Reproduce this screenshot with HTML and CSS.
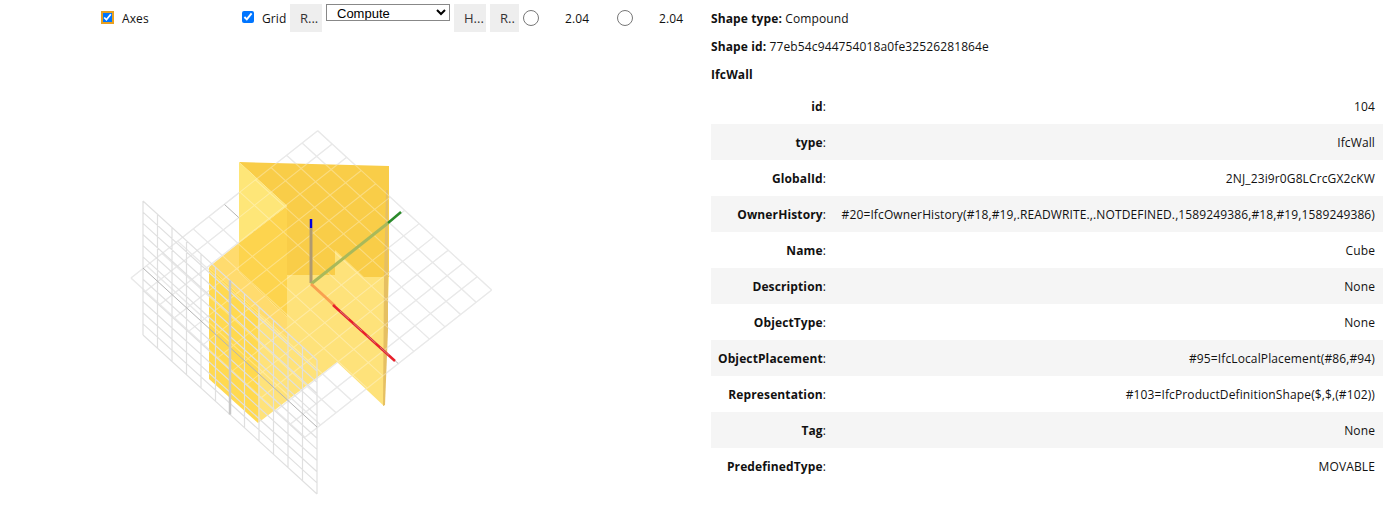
FILE: index.html
```html
<!DOCTYPE html>
<html lang="en">
<head>
  <meta charset="UTF-8">
  <meta name="viewport" content="width=device-width, initial-scale=1.0">
  <title>IfcWall</title>
  <link rel="stylesheet" href="styles.css">
</head>
<body>
  <div class="viewer">
    <div class="toolbar">
      <label class="check check-axes"><input type="checkbox" checked><span>Axes</span></label>
      <label class="check check-grid"><input type="checkbox" checked><span>Grid</span></label>
      <button class="tool-btn">R...</button>
      <select class="compute"><option>Compute</option></select>
      <button class="tool-btn">H...</button>
      <button class="tool-btn tool-btn-last">R..</button>
      <div class="clip clip-first"><input type="radio"><span>2.04</span></div>
      <div class="clip"><input type="radio"><span>2.04</span></div>
    </div>

    <svg class="scene" width="711" height="471" viewBox="0 36 711 471">
      <defs>
        <path id="cells" d="M0 0H12M0 1H12M0 2H12M0 3H12M0 4H12M0 5H12M0 7H12M0 8H12M0 9H12M0 10H12M0 11H12M0 12H12M0 0V12M1 0V12M2 0V12M3 0V12M4 0V12M5 0V12M7 0V12M8 0V12M9 0V12M10 0V12M11 0V12M12 0V12M6 0V12" vector-effect="non-scaling-stroke"/>
      </defs>

      <!-- floor grid -->
      <g class="grid-floor" transform="matrix(14.5 13.275 -15.56 12.275 317.7 130.7)">
        <use href="#cells"/>
        <path class="grid-center" d="M0 6H12" vector-effect="non-scaling-stroke"/>
      </g>

      <!-- wall -->
      <polygon class="wall-back" points="239,162 389,166 389,277 287,277 287,206"/>
      <polygon class="wall-tip" points="239,162 287,206 239,243"/>
      <polygon class="wall-mid" points="239,243 287,206 287,317 239,272"/>
      <polygon class="wall-light" points="287,275 335,275 335,250 364,277 389,277 384,406 337,362 258,423 258,312 287,338"/>
      <polygon class="wall-band" points="209,267 239,243 239,272 287,317 287,338 258,312"/>
      <polygon class="wall-left" points="209,267 258,312 258,423 209,379"/>
      <polygon class="wall-edge" points="386,190 388,190 388,330 385,405 383,406 384,277"/>

      <g class="grid-over" transform="matrix(14.5 13.275 -15.56 12.275 317.7 130.7)">
        <use href="#cells"/>
      </g>

      <!-- axes -->
      <path class="axis axis-z" d="M311 283V228"/>
      <path class="axis-tip tip-z" d="M311 228V219"/>
      <path class="axis axis-y" d="M311 284L388 223"/>
      <path class="axis-tip tip-y" d="M388 223L401 212"/>
      <path class="axis axis-x" d="M311 284L335 306"/>
      <path class="axis-tip tip-x" d="M333 305L395 361"/>
      <path class="tip-core" d="M340 311L392 358"/>

      <!-- side grid -->
      <g class="grid-side" transform="matrix(14.5 13.25 0 11.17 143 201)">
        <use href="#cells"/>
        <path class="grid-center" d="M0 6H12" vector-effect="non-scaling-stroke"/>
        <path class="grid-thick" d="M6 0V12" vector-effect="non-scaling-stroke"/>
      </g>
    </svg>
  </div>

  <div class="info">
    <p class="info-line"><b>Shape type:</b> Compound</p>
    <p class="info-line"><b>Shape id:</b> 77eb54c944754018a0fe32526281864e</p>
    <p class="info-line"><b>IfcWall</b></p>
    <table class="props">
      <tr><th><b>id</b>:</th><td>104</td></tr>
      <tr><th><b>type</b>:</th><td>IfcWall</td></tr>
      <tr><th><b>GlobalId</b>:</th><td>2NJ_23i9r0G8LCrcGX2cKW</td></tr>
      <tr><th><b>OwnerHistory</b>:</th><td>#20=IfcOwnerHistory(#18,#19,.READWRITE.,.NOTDEFINED.,1589249386,#18,#19,1589249386)</td></tr>
      <tr><th><b>Name</b>:</th><td>Cube</td></tr>
      <tr><th><b>Description</b>:</th><td>None</td></tr>
      <tr><th><b>ObjectType</b>:</th><td>None</td></tr>
      <tr><th><b>ObjectPlacement</b>:</th><td>#95=IfcLocalPlacement(#86,#94)</td></tr>
      <tr><th><b>Representation</b>:</th><td>#103=IfcProductDefinitionShape($,$,(#102))</td></tr>
      <tr><th><b>Tag</b>:</th><td>None</td></tr>
      <tr><th><b>PredefinedType</b>:</th><td>MOVABLE</td></tr>
    </table>
  </div>
</body>
</html>
```

FILE: styles.css
```css
* {
  box-sizing: border-box;
  margin: 0;
  padding: 0;
}

body {
  display: flex;
  font-family: "Open Sans", sans-serif;
  font-size: 12px;
  letter-spacing: 0.12px;
  color: #111;
  background-color: #fff;
  overflow: hidden;
}

.viewer {
  width: 711px;
  flex: none;
}

.toolbar {
  display: flex;
  align-items: flex-start;
  height: 36px;
  padding: 4px 0 0 102px;
}

.toolbar > * {
  flex: none;
}

.check {
  display: flex;
  align-items: center;
  height: 28px;
}

.check input {
  width: 12px;
  height: 12px;
  margin-right: 8px;
  margin-bottom: 2px;
  accent-color: #0075ff;
}

.check-axes {
  width: 140px;
}

.check-axes input {
  width: 11px;
  height: 11px;
  margin-right: 9px;
  outline: 2px solid #e8a020;
  outline-offset: -1px;
}

.check-grid {
  width: 48px;
}

.tool-btn {
  width: 32px;
  height: 28px;
  padding-left: 10px;
  border: none;
  background-color: #eee;
  font-family: inherit;
  font-size: 13px;
  text-align: left;
  color: #333;
  overflow: hidden;
  white-space: nowrap;
}

.tool-btn-last {
  width: 29px;
  margin-left: 4px;
}

.compute {
  width: 124px;
  height: 17px;
  margin: 0 4px;
  padding-left: 6px;
  border: 1px solid #888;
  background-color: #fff;
  font-family: "Liberation Sans", sans-serif;
  font-size: 13px;
  letter-spacing: 0;
}

.clip {
  display: flex;
  align-items: center;
  height: 28px;
  width: 94px;
}

.clip-first {
  margin-left: 4px;
}

.clip input {
  width: 16px;
  height: 16px;
  margin-right: 26px;
  appearance: none;
  border: 1px solid #777;
  border-radius: 50%;
}

.scene {
  display: block;
}

.scene use,
.scene path {
  fill: none;
}

.grid-floor,
.grid-side {
  stroke: #e0e0e0;
  stroke-width: 1.2;
  fill: none;
}

.grid-over {
  stroke: #fff;
  stroke-width: 1.1;
  opacity: 0.3;
  fill: none;
}

.grid-center {
  stroke: #b4b4b4;
  stroke-width: 1;
}

.grid-thick {
  stroke: #c8c8c8;
  stroke-width: 2.5;
}

.wall-back {
  fill: #f9cd48;
}

.wall-tip {
  fill: #fee678;
}

.wall-mid {
  fill: #fdd44e;
}

.wall-band {
  fill: #ffdb6e;
}

.wall-light {
  fill: #fee27a;
}

.wall-left {
  fill: #ffd950;
}

.wall-edge {
  fill: #e6c062;
}

.axis {
  stroke-width: 3;
}

.axis-z {
  stroke: #b09a70;
}

.axis-y {
  stroke: #a9b95a;
}

.axis-x {
  stroke: #f9a050;
}

.axis-tip {
  stroke-width: 2.5;
}

.tip-z {
  stroke: #0000e0;
}

.tip-y {
  stroke: #2a8a2a;
}

.tip-x {
  stroke: #e8202a;
}

.tip-core {
  stroke: #c98080;
  stroke-width: 1;
  stroke-dasharray: 12 6;
}

.info {
  flex: 1;
  padding: 1px 14px 0 0;
}

.info-line {
  height: 28px;
  line-height: 28px;
  padding-top: 4px;
}

.props {
  width: 100%;
  margin-top: 3px;
  border-collapse: collapse;
}

.props tr {
  height: 36px;
}

.props tr:nth-child(even) {
  background-color: #f5f5f5;
}

.props th {
  width: 115px;
  text-align: right;
  font-weight: normal;
}

.props td {
  text-align: right;
  padding-right: 8px;
}
```
